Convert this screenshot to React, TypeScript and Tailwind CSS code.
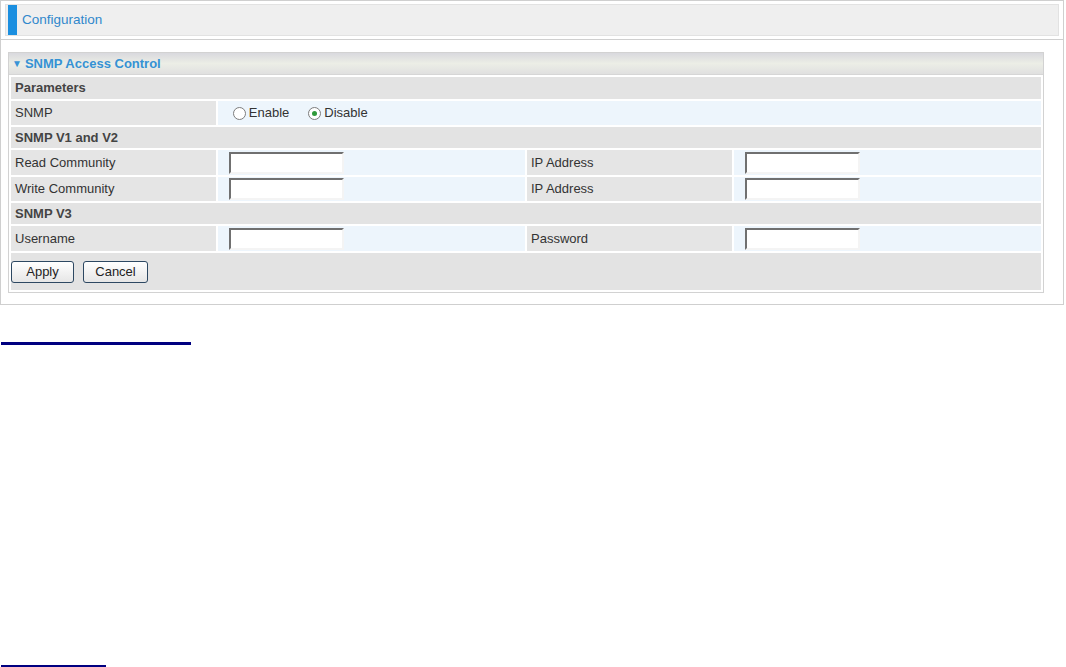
import React from 'react';

const label = 'bg-[#e5e5e5] pl-[4px] text-[#333] align-middle';
const value = 'bg-[#edf5fc] align-middle';
const heading = 'bg-[#e3e3e3] pl-[4px] font-bold text-[#444] align-middle';

function TextBox() {
  return (
    <input
      type="text"
      className="block w-[115px] h-[22px] bg-white border-2 border-t-[#707070] border-l-[#707070] border-r-[#f4f4f4] border-b-[#f4f4f4] outline-none"
    />
  );
}

function Radio({ checked, text }: { checked?: boolean; text: string }) {
  return (
    <label className="flex items-center gap-[3px] text-[#333]">
      <span className="flex items-center justify-center w-[13px] h-[13px] rounded-full border border-[#7c7c7c] bg-white">
        {checked && <span className="w-[5px] h-[5px] rounded-full bg-[#2f9a3a]" />}
      </span>
      {text}
    </label>
  );
}

export default function App() {
  return (
    <div className="w-[1066px] h-[667px] bg-white font-['Liberation_Sans',Arial,sans-serif] text-[13px] overflow-hidden">
      <div className="w-[1064px] border border-[#cfcfcf]">
        {/* page header */}
        <div className="h-[39px] px-[4px] pt-[3px] border-b border-[#cfcfcf]">
          <div className="flex items-center h-[32px] bg-[#efefef] border border-[#e2e2e2]">
            <div className="w-[9px] h-full bg-[#1b8fe0] ml-[2px]" />
            <span className="ml-[5px] pt-[1px] text-[13.5px] text-[#2f88cc]">Configuration</span>
          </div>
        </div>

        <div className="pt-[12px] pb-[11px] pl-[7px] pr-[19px]">
          <div className="border border-[#d2d2d2]">
            <div className="flex items-center h-[22px] bg-gradient-to-b from-[#d9d9de] via-[#eceee6] to-[#e0e0e0] border-b border-[#d6d6d6] pl-[3px]">
              <span className="text-[10px] text-[#3a94d6] mr-[3px]">▼</span>
              <span className="font-bold text-[#3592d4]">SNMP Access Control</span>
            </div>
            <table className="w-full table-fixed border-separate border-spacing-[2px]">
              <colgroup>
                <col className="w-[20%]" />
                <col className="w-[30%]" />
                <col className="w-[20%]" />
                <col className="w-[30%]" />
              </colgroup>
              <tbody>
                <tr className="h-[22px]">
                  <td colSpan={4} className={heading}>Parameters</td>
                </tr>
                <tr className="h-[24px]">
                  <td className={label}>SNMP</td>
                  <td colSpan={3} className={value}>
                    <div className="flex items-center gap-[19px] pl-[15px]">
                      <Radio text="Enable" />
                      <Radio checked text="Disable" />
                    </div>
                  </td>
                </tr>
                <tr className="h-[21px]">
                  <td colSpan={4} className={heading}>SNMP V1 and V2</td>
                </tr>
                <tr className="h-[25px]">
                  <td className={label}>Read Community</td>
                  <td className={`${value} pl-[11px]`}><TextBox /></td>
                  <td className={label}>IP Address</td>
                  <td className={`${value} pl-[11px]`}><TextBox /></td>
                </tr>
                <tr className="h-[24px]">
                  <td className={label}>Write Community</td>
                  <td className={`${value} pl-[11px]`}><TextBox /></td>
                  <td className={label}>IP Address</td>
                  <td className={`${value} pl-[11px]`}><TextBox /></td>
                </tr>
                <tr className="h-[21px]">
                  <td colSpan={4} className={heading}>SNMP V3</td>
                </tr>
                <tr className="h-[25px]">
                  <td className={label}>Username</td>
                  <td className={`${value} pl-[11px]`}><TextBox /></td>
                  <td className={label}>Password</td>
                  <td className={`${value} pl-[11px]`}><TextBox /></td>
                </tr>
                <tr className="h-[37px]">
                  <td colSpan={4} className="bg-[#e3e3e3] align-middle">
                    <div className="flex gap-[9px]">
                      <button className="w-[63px] h-[22px] rounded-[3px] border border-[#2d4862] bg-gradient-to-b from-white to-[#e6e6e6] text-[#222]">
                        Apply
                      </button>
                      <button className="w-[65px] h-[22px] rounded-[3px] border border-[#2d4862] bg-gradient-to-b from-white to-[#e6e6e6] text-[#222]">
                        Cancel
                      </button>
                    </div>
                  </td>
                </tr>
              </tbody>
            </table>
          </div>
        </div>
      </div>

      <div className="mt-[37px] ml-[1px] w-[190px] h-[3px] bg-[#000080]" />
      <div className="mt-[320px] ml-[1px] w-[105px] h-[3px] bg-[#000080]" />
    </div>
  );
}
